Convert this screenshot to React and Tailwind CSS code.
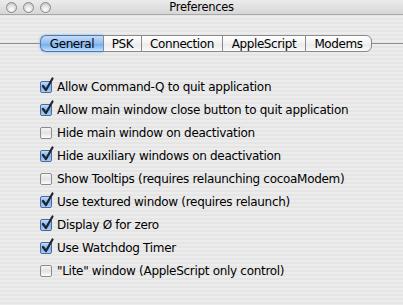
import React, { useState } from 'react';

const options = [
  { label: 'Allow Command-Q to quit application', on: true },
  { label: 'Allow main window close button to quit application', on: true },
  { label: 'Hide main window on deactivation', on: false },
  { label: 'Hide auxiliary windows on deactivation', on: true },
  { label: 'Show Tooltips (requires relaunching cocoaModem)', on: false },
  { label: 'Use textured window (requires relaunch)', on: true },
  { label: 'Display Ø for zero', on: true },
  { label: 'Use Watchdog Timer', on: true },
  { label: '"Lite" window (AppleScript only control)', on: false },
];

const tabs = ['General', 'PSK', 'Connection', 'AppleScript', 'Modems'];
const tabWidths = ['w-[63px]', 'w-[38px]', 'w-[81px]', 'w-[83px]', 'w-[67px]'];

function Light() {
  return (
    <div className="w-[11px] h-[11px] rounded-full border border-[#8a8a8a] bg-[radial-gradient(circle_at_50%_70%,#ffffff_0%,#e0e0e0_50%,#b8b8b8_100%)]" />
  );
}

function Checkbox({ on }) {
  return (
    <div className="relative w-[12px] h-[12px] shrink-0">
      <div
        className={
          on
            ? 'w-full h-full rounded-[2px] border border-[#4a6a9a] bg-[linear-gradient(#c6dcf6,#7fb0ea_50%,#a9cdf5)]'
            : 'w-full h-full rounded-[2px] border border-[#8c8c8c] bg-[linear-gradient(#f6f6f6,#e2e2e2_50%,#fdfdfd)]'
        }
      />
      {on && (
        <svg className="absolute left-[1px] top-[-4px]" width="13" height="15" viewBox="0 0 13 15">
          <path d="M2 9 L5 13 L11.5 1.5" fill="none" stroke="#1d2433" strokeWidth="2.2" strokeLinecap="round" strokeLinejoin="round" />
        </svg>
      )}
    </div>
  );
}

export default function App() {
  const [active] = useState(0);

  return (
    <div className="w-[403px] h-[305px] overflow-hidden flex flex-col bg-[repeating-linear-gradient(#ececec_0px,#ececec_2px,#e5e5e5_2px,#e5e5e5_4px)] font-['DejaVu_Sans',sans-serif] text-black">
      {/* title bar */}
      <div className="relative h-[15px] shrink-0 flex items-center justify-center border-b border-[#a8a8a8] bg-[linear-gradient(#ebebeb,#d6d6d6)]">
        <div className="absolute left-[6px] top-[2px] flex gap-[6px]">
          <Light />
          <Light />
          <Light />
        </div>
        <span className="text-[11.5px] leading-none tracking-[-0.3px] mt-[1px]">Preferences</span>
      </div>

      {/* tab strip */}
      <div className="relative mt-[20px] h-[17px] flex items-center">
        <div className="absolute left-0 right-0 top-[8px] h-px bg-[#8e8e8e]" />
        <div className="relative ml-[40px] flex h-[17px]">
          {tabs.map((t, i) => (
            <div
              key={t}
              className={[
                'flex items-center justify-center text-[12px] tracking-[-0.4px] h-full border-y border-[#8a8a8a]',
                tabWidths[i],
                i === active
                  ? 'rounded-l-[6px] border-l border-[#5577a8] shadow-[0_0_3px_#7fb2ee] bg-[linear-gradient(#c5dcf6,#8ebdf0_50%,#6aa8ec_51%,#bfe1ff)]'
                  : 'border-l bg-[linear-gradient(#ffffff,#f1f1f1_50%,#e8e8e8_51%,#fbfbfb)]',
                i === tabs.length - 1 ? 'rounded-r-[6px] border-r' : '',
              ].join(' ')}
            >
              {t}
            </div>
          ))}
        </div>
      </div>

      {/* options */}
      <div className="mt-[23px] ml-[40px] flex flex-col">
        {options.map((o) => (
          <div key={o.label} className="h-[23px] flex items-center gap-[5px]">
            <Checkbox on={o.on} />
            <span className="text-[12px] leading-none tracking-[-0.3px]">{o.label}</span>
          </div>
        ))}
      </div>
    </div>
  );
}
